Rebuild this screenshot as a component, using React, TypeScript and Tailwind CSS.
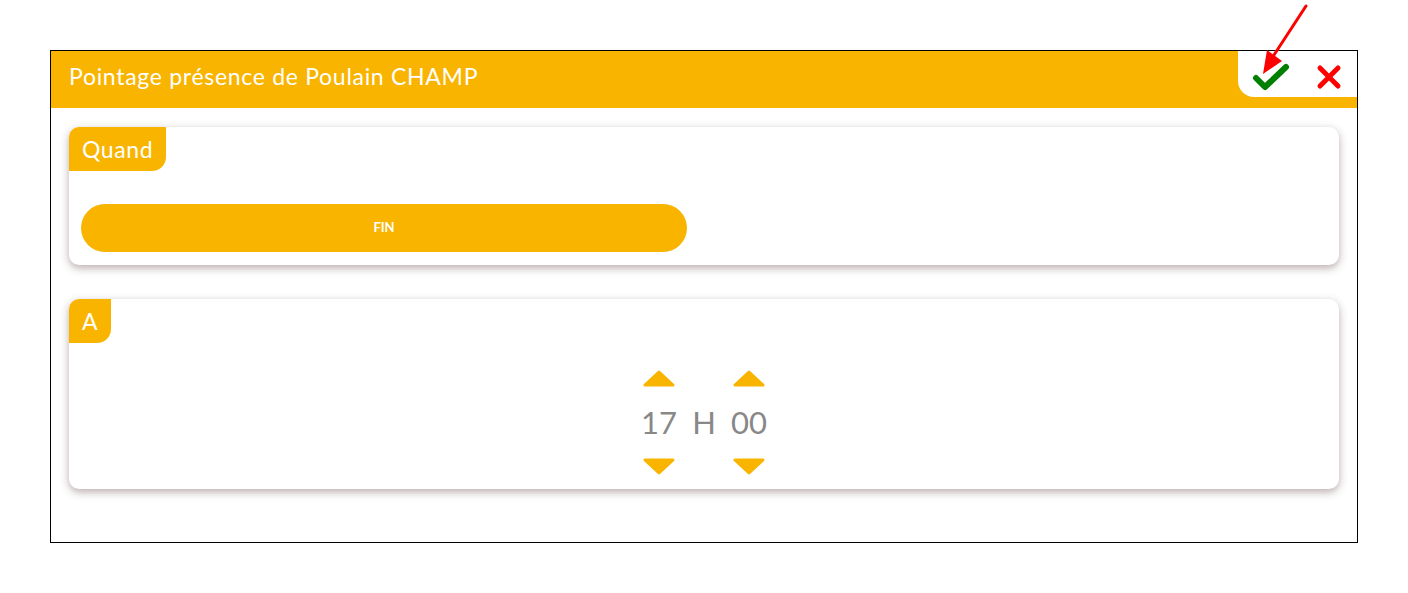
import React from "react"

const font = { fontFamily: "Lato, 'Open Sans', sans-serif" }

function Caret({ down }: { down?: boolean }) {
  return (
    <svg width="32" height="17" viewBox="0 0 32 17" className="block">
      <polygon
        points={down ? "2,2 30,2 16,15" : "2,15 30,15 16,2"}
        fill="#f9b400"
        stroke="#f9b400"
        strokeWidth="3"
        strokeLinejoin="round"
      />
    </svg>
  )
}

function Tab({ label }: { label: string }) {
  return (
    <div className="h-[44px] px-[13px] bg-[#f9b400] text-white text-[23px] tracking-[0.6px] rounded-br-[14px] rounded-tl-[10px] flex items-center self-start">
      {label}
    </div>
  )
}

export default function App() {
  return (
    <div className="relative w-[1408px] h-[593px] bg-white" style={font}>
      <div className="absolute left-[50px] top-[50px] w-[1308px] h-[493px] border border-black flex flex-col">
        <div className="h-[57px] bg-[#f9b400] flex justify-between">
          <div className="pl-[18px] pb-[7px] flex items-center text-white text-[23px] tracking-[0.7px]">
            Pointage présence de Poulain CHAMP
          </div>
          <div className="w-[119px] h-[46px] bg-white rounded-bl-[16px] flex items-center pt-[6px] pl-[14px] gap-[26px]">
            <svg width="38" height="28" viewBox="0 0 38 28">
              <path d="M4 15 L13 24 L34 4" fill="none" stroke="#008000" strokeWidth="6" strokeLinecap="round" strokeLinejoin="round" />
            </svg>
            <svg width="26" height="26" viewBox="0 0 26 26">
              <path d="M4 4 L22 22 M22 4 L4 22" fill="none" stroke="#ff0000" strokeWidth="5" strokeLinecap="round" />
            </svg>
          </div>
        </div>

        <div className="flex-1 px-[18px] pt-[19px] flex flex-col gap-[34px]">
          <div className="h-[138px] bg-white rounded-[10px] shadow-[0_3px_8px_0_rgba(100,70,70,0.45)] flex flex-col">
            <Tab label="Quand" />
            <div className="mt-[33px] ml-[12px] w-[606px] h-[48px] rounded-full bg-[#f9b400] text-white text-[13px] font-bold flex items-center justify-center">
              FIN
            </div>
          </div>

          <div className="h-[190px] bg-white rounded-[10px] shadow-[0_3px_8px_0_rgba(100,70,70,0.45)] flex flex-col">
            <Tab label="A" />
            <div className="mt-[27px] flex justify-center text-[#888888] text-[31px]">
              <div className="w-[60px] flex flex-col items-center">
                <Caret />
                <div className="h-[71px] flex items-center">17</div>
                <Caret down />
              </div>
              <div className="w-[30px] flex items-center justify-center">H</div>
              <div className="w-[60px] flex flex-col items-center">
                <Caret />
                <div className="h-[71px] flex items-center">00</div>
                <Caret down />
              </div>
            </div>
          </div>
        </div>
      </div>

      <svg className="absolute left-0 top-0 pointer-events-none" width="1408" height="120">
        <line x1="1306" y1="6" x2="1272" y2="58" stroke="#ff0000" strokeWidth="3" strokeLinecap="round" />
        <polygon points="1263,74 1267,50 1282,61" fill="#ff0000" />
      </svg>
    </div>
  )
}
